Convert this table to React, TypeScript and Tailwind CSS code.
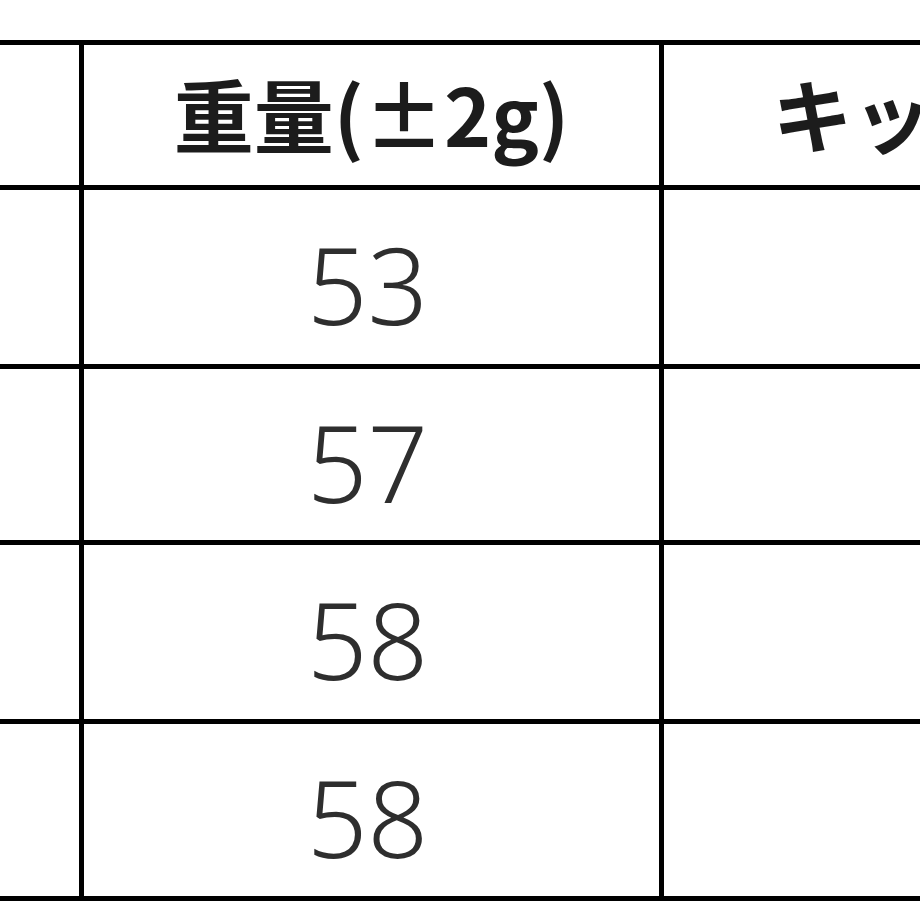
const rows = [
    { weight: '53', h: 'h-[179px]' },
    { weight: '57', h: 'h-[176px]' },
    { weight: '58', h: 'h-[179px]' },
    { weight: '58', h: 'h-[177px]' },
];

const jp = { fontFamily: '"Noto Sans CJK JP", "Noto Sans", sans-serif' };

export default function App() {
    return (
        <div className="h-[920px] w-[920px] overflow-hidden bg-white pt-[40px]">
            <div className="w-[1300px] border-y-[5px] border-black" style={jp}>
                <div className="flex h-[140px]">
                    <div className="w-[79px]" />
                    <div className="flex w-[580px] items-center justify-center border-l-[5px] border-black pb-[6px] text-[80px] font-bold leading-none text-[#1c1c1c]">
                        重量(±2g)
                    </div>
                    <div className="flex w-[462px] items-center justify-center border-l-[5px] border-black pb-[6px] text-[80px] font-bold leading-none text-[#1c1c1c]">
                        キッズ
                    </div>
                </div>
                {rows.map((row, i) => (
                    <div key={i} className={`flex border-t-[5px] border-black ${row.h}`}>
                        <div className="w-[79px]" />
                        <div
                            className="flex w-[580px] items-center justify-center border-l-[5px] border-black pt-[14px] pr-[8px] text-[106px] font-light leading-none text-[#2e2e2e]"
                            style={{ fontFamily: '"Noto Sans", sans-serif' }}
                        >
                            {row.weight}
                        </div>
                        <div className="w-[462px] border-l-[5px] border-black" />
                    </div>
                ))}
            </div>
        </div>
    );
}
